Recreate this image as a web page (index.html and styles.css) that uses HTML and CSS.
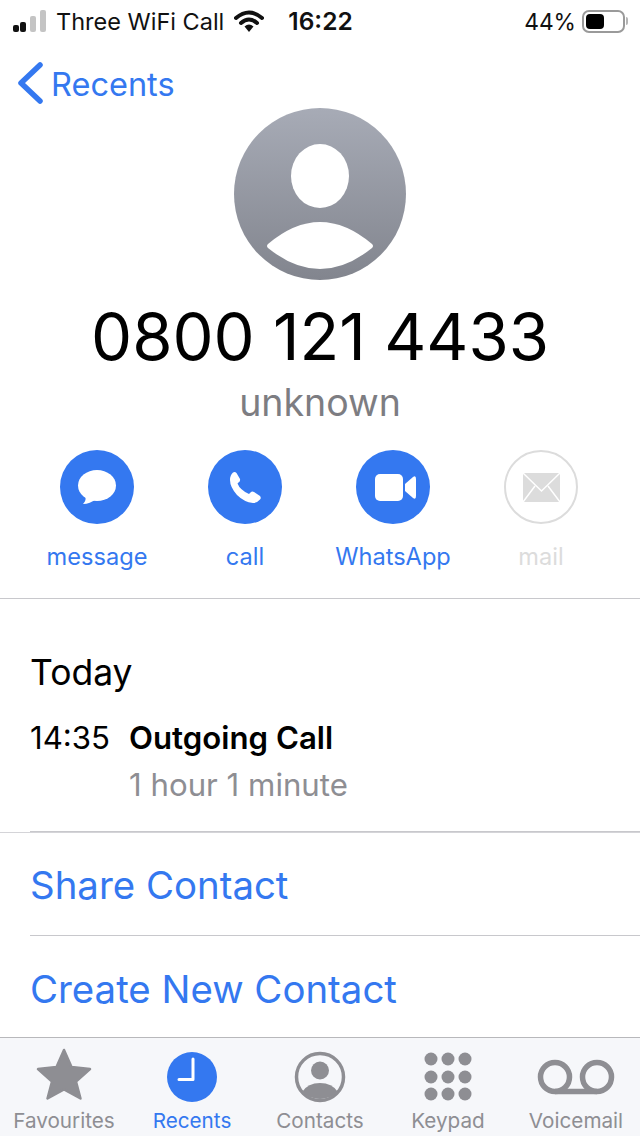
FILE: index.html
```html
<!DOCTYPE html>
<html lang="en">
<head>
    <meta charset="UTF-8">
    <meta name="viewport" content="width=device-width, initial-scale=1.0">
    <title>Call details</title>
    <link rel="stylesheet" href="styles.css">
</head>
<body>
    <div class="phone">
        <!-- Status bar -->
        <div class="status-bar">
            <div class="status-left">
                <svg class="signal" width="34" height="22" viewBox="0 0 34 22">
                    <rect x="0" y="15" width="6" height="7" rx="2" fill="#111"/>
                    <rect x="7" y="12" width="6" height="10" rx="2" fill="#111"/>
                    <rect x="17" y="6" width="6" height="16" rx="2" fill="#c4c4c4"/>
                    <rect x="27" y="0" width="6" height="22" rx="2" fill="#c4c4c4"/>
                </svg>
                <span class="carrier">Three WiFi Call</span>
                <svg class="wifi" width="30" height="22" viewBox="0 0 30 22">
                    <path d="M2 8 Q15 -3 28 8" fill="none" stroke="#111" stroke-width="4" stroke-linecap="round"/>
                    <path d="M7 13 Q15 6 23 13" fill="none" stroke="#111" stroke-width="4" stroke-linecap="round"/>
                    <path d="M10.5 16.5 Q15 12.5 19.5 16.5 L15 22 Z" fill="#111"/>
                </svg>
            </div>
            <div class="status-time">16:22</div>
            <div class="status-right">
                <span class="percent">44%</span>
                <div class="battery"><div class="battery-level"></div></div>
                <div class="battery-tip"></div>
            </div>
        </div>

        <!-- Back link -->
        <nav class="nav">
            <svg width="28" height="44" viewBox="0 0 28 44">
                <path d="M23 3 L4 21 L23 39" fill="none" stroke="#3478f0" stroke-width="5.5" stroke-linecap="round" stroke-linejoin="round"/>
            </svg>
            <span>Recents</span>
        </nav>

        <!-- Contact header -->
        <section class="contact">
            <svg class="avatar" width="172" height="172" viewBox="0 0 172 172">
                <defs>
                    <linearGradient id="avatar-fill" x1="0" y1="0" x2="0" y2="1">
                        <stop offset="0" stop-color="#a7abb6"/>
                        <stop offset="1" stop-color="#82858e"/>
                    </linearGradient>
                </defs>
                <circle cx="86" cy="86" r="86" fill="url(#avatar-fill)"/>
                <ellipse cx="86" cy="68" rx="29" ry="32" fill="#fff"/>
                <path d="M34 136 Q86 92 138 136 Q140 138 138 140 Q86 182 34 140 Q32 138 34 136 Z" fill="#fff"/>
            </svg>
            <h1 class="number">0800 121 4433</h1>
            <p class="label">unknown</p>
        </section>

        <!-- Actions -->
        <section class="actions">
            <div class="action">
                <svg width="74" height="74" viewBox="0 0 74 74">
                    <circle cx="37" cy="37" r="37" fill="#3478f0"/>
                    <ellipse cx="37" cy="35.5" rx="19" ry="15.5" fill="#fff"/>
                    <path d="M25 44 Q27 50 23 54 Q30 54 36 49 Z" fill="#fff"/>
                </svg>
                <span>message</span>
            </div>
            <div class="action">
                <svg width="74" height="74" viewBox="0 0 74 74">
                    <circle cx="37" cy="37" r="37" fill="#3478f0"/>
                    <path d="M25 22.5 Q27 21.5 28.5 23 L32 29 Q32.5 31.5 30.5 32.5 L29.5 33.5 Q32 40 41 44 L42.5 42.5 Q44 41 46 42 L52 46 Q53.5 48 52 49.5 Q49 53 45 53 Q36 52 29 45 Q22 37 22 30 Q22 25 25 22.5 Z" fill="#fff"/>
                </svg>
                <span>call</span>
            </div>
            <div class="action">
                <svg width="74" height="74" viewBox="0 0 74 74">
                    <circle cx="37" cy="37" r="37" fill="#3478f0"/>
                    <rect x="19" y="24" width="28" height="27" rx="5" fill="#fff"/>
                    <path d="M49 34 L57 27 Q60 25 60 29 V46 Q60 50 57 48 L49 41 Z" fill="#fff"/>
                </svg>
                <span>WhatsApp</span>
            </div>
            <div class="action disabled">
                <svg width="74" height="74" viewBox="0 0 74 74">
                    <circle cx="37" cy="37" r="36" fill="#fff" stroke="#dcdcdc" stroke-width="2"/>
                    <rect x="19" y="23" width="37" height="29" fill="#dcdcdc"/>
                    <path d="M19 23 L37.5 41 L56 23" fill="none" stroke="#fff" stroke-width="1.5"/>
                    <path d="M19 52 L31 36 M56 52 L44 36" fill="none" stroke="#fff" stroke-width="1.5"/>
                </svg>
                <span>mail</span>
            </div>
        </section>

        <!-- Call history -->
        <section class="history">
            <div class="history-inner">
                <h2>Today</h2>
                <div class="call-row">
                    <span class="call-time">14:35</span>
                    <div>
                        <div class="call-type">Outgoing Call</div>
                        <div class="call-length">1 hour 1 minute</div>
                    </div>
                </div>
            </div>
        </section>

        <!-- Links -->
        <section class="links">
            <div class="link-row">Share Contact</div>
            <div class="link-row">Create New Contact</div>
        </section>

        <!-- Tab bar -->
        <footer class="tabbar">
            <div class="tab">
                <svg width="80" height="56" viewBox="0 0 80 56">
                    <path d="M40 3 L47.5 20 L66 22 L52 34.5 L56.5 51.5 L40 42.5 L23.5 51.5 L28 34.5 L14 22 L32.5 20 Z" fill="#8e8e93" stroke="#8e8e93" stroke-width="2.5" stroke-linejoin="round"/>
                </svg>
                <span>Favourites</span>
            </div>
            <div class="tab active">
                <svg width="80" height="56" viewBox="0 0 80 56">
                    <circle cx="40" cy="30" r="25" fill="#3478f0"/>
                    <path d="M41 12 V32.5 H27" fill="none" stroke="#fff" stroke-width="3" stroke-linecap="round" stroke-linejoin="round"/>
                </svg>
                <span>Recents</span>
            </div>
            <div class="tab">
                <svg width="80" height="56" viewBox="0 0 80 56">
                    <circle cx="40" cy="30" r="23.5" fill="none" stroke="#8e8e93" stroke-width="3.5"/>
                    <circle cx="40" cy="23.5" r="9" fill="#8e8e93"/>
                    <path d="M22 45 Q28 36 40 36 Q52 36 58 45 Q50 52 40 52 Q30 52 22 45 Z" fill="#8e8e93"/>
                </svg>
                <span>Contacts</span>
            </div>
            <div class="tab">
                <svg width="80" height="56" viewBox="0 0 80 56">
                    <g fill="#8e8e93">
                        <circle cx="23" cy="12" r="6.5"/><circle cx="40" cy="12" r="6.5"/><circle cx="57" cy="12" r="6.5"/>
                        <circle cx="23" cy="30" r="6.5"/><circle cx="40" cy="30" r="6.5"/><circle cx="57" cy="30" r="6.5"/>
                        <circle cx="23" cy="47" r="6.5"/><circle cx="40" cy="47" r="6.5"/><circle cx="57" cy="47" r="6.5"/>
                    </g>
                </svg>
                <span>Keypad</span>
            </div>
            <div class="tab">
                <svg width="80" height="56" viewBox="0 0 80 56">
                    <g fill="none" stroke="#8e8e93" stroke-width="5.5">
                        <circle cx="19" cy="30" r="14.5"/>
                        <circle cx="61" cy="30" r="14.5"/>
                        <path d="M19 44.5 H61"/>
                    </g>
                </svg>
                <span>Voicemail</span>
            </div>
        </footer>
    </div>
</body>
</html>
```

FILE: styles.css
```css
/* Base */
body {
    margin: 0;
    font-family: Inter, "Liberation Sans", sans-serif;
    background: #fff;
    color: #000;
}

.phone {
    width: 640px;
    height: 1136px;
    display: flex;
    flex-direction: column;
    overflow: hidden;
}

.phone > * {
    flex-shrink: 0;
}

/* Status bar */
.status-bar {
    display: grid;
    grid-template-columns: 1fr auto 1fr;
    align-items: center;
    height: 42px;
    padding: 0 12px 0 13px;
    font-size: 23.5px;
    color: #111;
}

.status-left,
.status-right {
    display: flex;
    align-items: center;
}

.status-left .carrier {
    margin-left: 9px;
    margin-right: 10px;
}

.status-right {
    justify-content: flex-end;
}

.status-time {
    font-size: 24.5px;
    font-weight: 600;
}

.percent {
    margin-right: 6px;
    font-size: 22.8px;
}

.battery {
    width: 43px;
    height: 23px;
    box-sizing: border-box;
    border: 2px solid #9a9a9a;
    border-radius: 7px;
    padding: 2px;
}

.battery-level {
    width: 18px;
    height: 100%;
    background: #000;
    border-radius: 4px;
}

.battery-tip {
    width: 2px;
    height: 8px;
    margin-left: 1px;
    background: #b5b5b5;
    border-radius: 0 2px 2px 0;
}

/* Back link */
.nav {
    display: flex;
    align-items: center;
    gap: 6px;
    height: 44px;
    margin-top: 20px;
    padding-left: 17px;
    font-size: 32.5px;
    color: #3478f0;
}

/* Contact header */
.contact {
    display: flex;
    flex-direction: column;
    align-items: center;
}

.avatar {
    display: block;
    margin-top: 2px;
}

.number {
    margin: 15px 0 0;
    font-size: 65.2px;
    line-height: 84px;
    font-weight: 400;
}

.label {
    margin: 1px 0 0;
    font-size: 37.5px;
    line-height: 46px;
    color: #7d7d82;
}

/* Actions */
.actions {
    display: grid;
    grid-template-columns: repeat(4, 148px);
    padding: 24px 23px 0;
    height: 148px;
    border-bottom: 1px solid #c8c8cc;
}

.action {
    display: flex;
    flex-direction: column;
    align-items: center;
    gap: 19px;
    font-size: 23.6px;
    line-height: 28px;
    color: #3478f0;
}

.action svg {
    display: block;
}

.action.disabled {
    color: #dcdcdc;
}

/* Call history */
.history {
    border-bottom: 1px solid #d4d4d8;
}

.history-inner {
    height: 232px;
    margin-left: 30px;
    border-bottom: 1px solid #c8c8cc;
}

.history h2 {
    margin: 0;
    padding-top: 52px;
    font-size: 35.5px;
    line-height: 44px;
    font-weight: 400;
}

.call-row {
    display: flex;
    gap: 19px;
    margin-top: 20px;
    font-size: 31.2px;
    line-height: 47px;
}

.call-type {
    font-weight: 600;
}

.call-length {
    color: #8e8e93;
}

/* Links */
.links {
    flex: 1 1 0;
    min-height: 0;
    margin-left: 30px;
}

.link-row {
    height: 102px;
    line-height: 104px;
    font-size: 38.4px;
    color: #3478f0;
    border-bottom: 1px solid #c8c8cc;
}

.link-row:last-child {
    line-height: 106px;
    border-bottom: none;
}

/* Tab bar */
.tabbar {
    display: grid;
    grid-template-columns: repeat(5, 128px);
    height: 99px;
    padding-top: 9px;
    box-sizing: border-box;
    background: #f6f7fa;
    border-top: 1px solid #b8b8bb;
}

.tab {
    display: flex;
    flex-direction: column;
    align-items: center;
    font-size: 20.7px;
    line-height: 26px;
    color: #8e8e93;
}

.tab svg {
    display: block;
    margin-bottom: 5px;
}

.tab.active {
    color: #3478f0;
}
```
